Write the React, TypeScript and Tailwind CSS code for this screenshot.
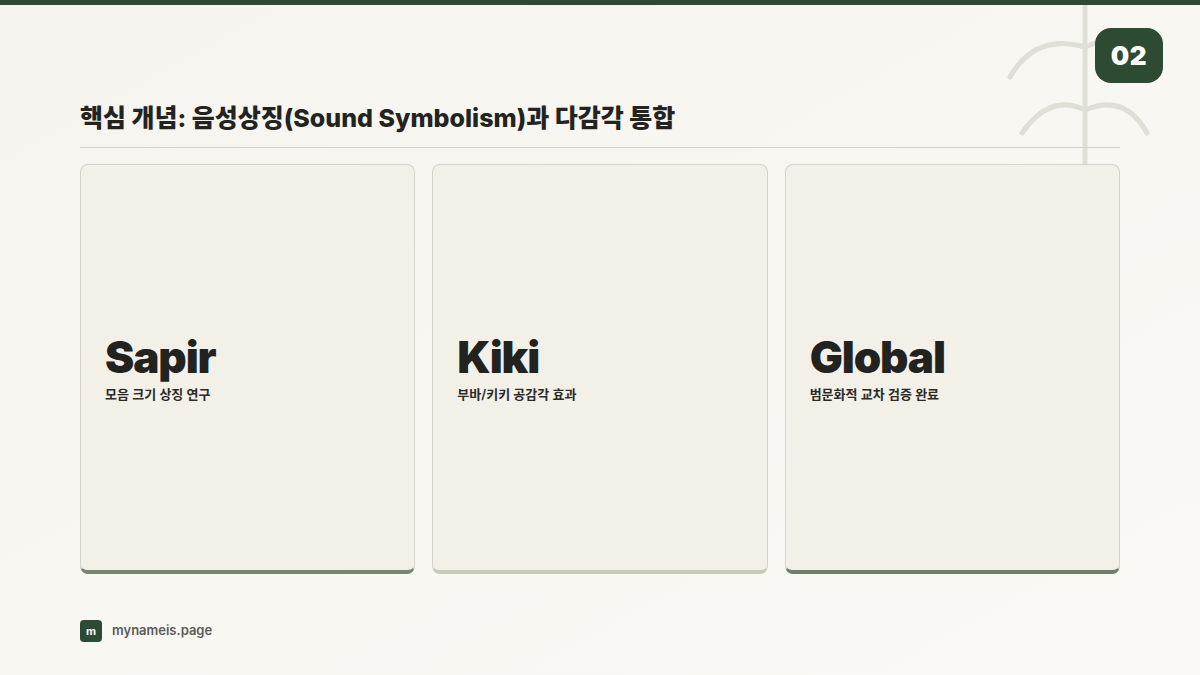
export default function App() {
  const cards = [
    { t: 'Sapir', s: '모음 크기 상징 연구', b: 'border-b-[#76866f]' },
    { t: 'Kiki', s: '부바/키키 공감각 효과', b: 'border-b-[#c5ccb8]' },
    { t: 'Global', s: '범문화적 교차 검증 완료', b: 'border-b-[#6f7f69]' },
  ];
  return (
    <div
      className="relative w-[1200px] h-[675px] overflow-hidden bg-gradient-to-br from-[#f6f4ee] to-[#faf9f5] border-t-[5px] border-[#2d4a32] flex flex-col px-20"
      style={{ fontFamily: 'Inter, "Noto Sans CJK KR", sans-serif' }}
    >
      <svg className="absolute left-[1000px] top-0" width="160" height="170" viewBox="0 0 160 170" fill="none" stroke="#dedfd5" strokeWidth="5" strokeLinecap="round">
        <line x1="85" y1="0" x2="85" y2="165" />
        <path d="M10 72 Q35 28 85 42 Q115 30 120 38" />
        <path d="M22 128 Q50 88 85 105 Q125 88 147 128" />
      </svg>
      <div className="absolute right-[37px] top-[23px] w-[68px] h-[55px] rounded-2xl bg-[#2d4a32] flex items-center justify-center text-white text-[26px] font-black tracking-wide">
        02
      </div>
      <h1 className="relative mt-[97px] text-[25px] font-extrabold text-[#23231f] tracking-normal leading-8">
        핵심 개념: 음성상징(Sound Symbolism)과 다감각 통합
      </h1>
      <div className="relative mt-[13px] h-px bg-[#d6d2c6]" />
      <div className="relative mt-4 grid grid-cols-3 gap-[17px]">
        {cards.map((c) => (
          <div
            key={c.t}
            className={`h-[410px] rounded-lg border border-[#d8d3c6] border-b-4 ${c.b} bg-[#f3f0e8] flex flex-col justify-center px-6`}
          >
            <div className="text-[44px] font-black text-[#22221e] tracking-tight leading-[52px]">{c.t}</div>
            <div className="mt-[2px] text-[13px] font-semibold text-[#2a2a26]">{c.s}</div>
          </div>
        ))}
      </div>
      <div className="relative mt-[46px] flex items-center gap-[10px]">
        <div className="w-[22px] h-[22px] rounded bg-[#2d4a32] text-white text-[11px] font-bold flex items-center justify-center">m</div>
        <span className="text-[13px] font-semibold text-[#5b5b57]">mynameis.page</span>
      </div>
    </div>
  );
}
